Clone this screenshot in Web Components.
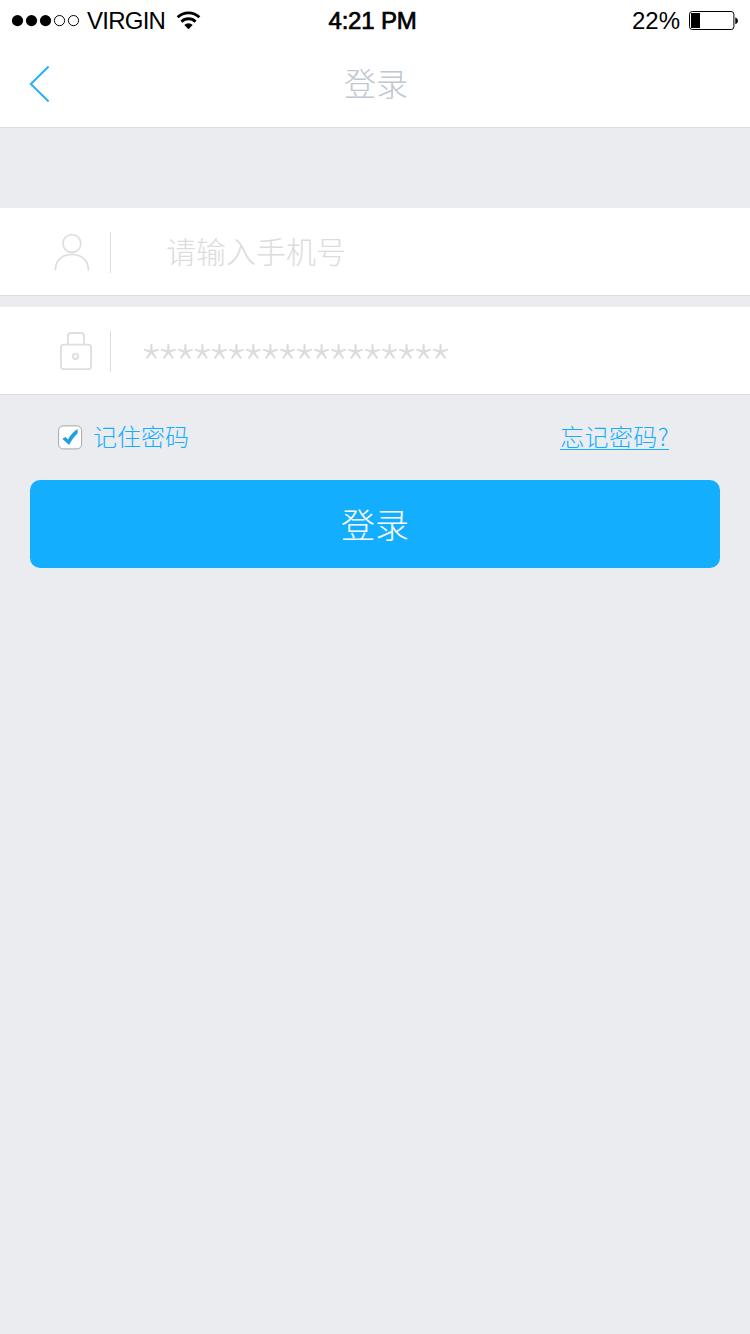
<!DOCTYPE html>
<html lang="zh-CN">
<head>
<meta charset="utf-8">
<title>登录</title>
<style>
  body {
    margin: 0;
    background: #ebecf0;
    font-family: "Liberation Sans", "Noto Sans CJK SC", sans-serif;
    --blue: #14aeff;
    --line: #dcdcde;
    --hint: #dcdcdc;
  }
</style>
</head>
<body>
<login-page></login-page>

<script>
// every component renders its markup once into an open shadow root
class BaseElement extends HTMLElement {
  constructor() {
    super();
    this.attachShadow({ mode: "open" });
    this.shadowRoot.innerHTML = this.render();
  }
}

class StatusBar extends BaseElement {
  render() {
    return `
      <style>
        :host {
          display: grid;
          grid-template-columns: 1fr auto 1fr;
          align-items: center;
          box-sizing: border-box;
          height: 40px;
          padding: 2px 12px 0;
          background: #fff;
          color: #000;
          font-size: 24px;
          line-height: 38px;
          white-space: nowrap;
        }
        svg { display: block; }
        div { display: flex; align-items: center; }
        .carrier { width: 79px; margin: 0 10px 0 7px; letter-spacing: -0.75px; }
        .time { -webkit-text-stroke: 0.7px #000; letter-spacing: -0.2px; margin-right: 5px; }
        .right { justify-content: flex-end; }
        .percent { margin-right: 1px; }
        .battery { margin: -1px 0 0 8px; }
        .dots, .wifi { margin-top: -1px; }
      </style>
      <div>
        <svg class="dots" width="68" height="12" viewBox="0 0 68 12">
          <circle cx="5.5" cy="5.6" r="5.6"/>
          <circle cx="19.5" cy="5.6" r="5.6"/>
          <circle cx="33.5" cy="5.6" r="5.6"/>
          <circle cx="47.5" cy="5.6" r="5.1" fill="none" stroke="#000"/>
          <circle cx="61.5" cy="5.6" r="5.1" fill="none" stroke="#000"/>
        </svg>
        <span class="carrier">VIRGIN</span>
        <svg class="wifi" width="25" height="19" viewBox="0 0 26 20">
          <g fill="none" stroke="#000" stroke-width="3">
            <path d="M1.6 6.6 A16.2 16.2 0 0 1 24.4 6.6"/>
            <path d="M5.6 11.2 A10.5 10.5 0 0 1 20.4 11.2"/>
          </g>
          <path d="M8.6 14.8 A5.9 5.9 0 0 1 17.4 14.8 L13 19.2 Z"/>
        </svg>
      </div>
      <span class="time">4:21 PM</span>
      <div class="right">
        <span class="percent">22%</span>
        <svg class="battery" width="49" height="20" viewBox="0 0 49 20">
          <rect x="0.5" y="0.5" width="44.4" height="18" rx="2.8" fill="none" stroke="#000"/>
          <rect x="2" y="2" width="9" height="15"/>
          <path d="M46.3 6.2 Q49 7.2 49 9.7 Q49 12.2 46.3 13.2 Z"/>
        </svg>
      </div>
    `;
  }
}

class NavBar extends BaseElement {
  render() {
    return `
      <style>
        :host {
          display: grid;
          grid-template-columns: 1fr auto 1fr;
          align-items: center;
          box-sizing: border-box;
          height: 88px;
          padding: 0 29px;
          background: #fff;
          border-bottom: 1px solid var(--line);
        }
        svg { display: block; }
        .title {
          color: #c0c7d0;
          font: 300 32px/40px "Noto Sans CJK SC", sans-serif;
          margin: 0 0 3px 2px;
        }
      </style>
      <svg width="22" height="38" viewBox="0 0 22 38">
        <path d="M19.6 1.5 L1.8 19 L19.6 36.5" fill="none" stroke="#28b0fa" stroke-width="2"/>
      </svg>
      <span class="title"><slot></slot></span>
    `;
  }
}

class InputRow extends BaseElement {
  render() {
    return `
      <style>
        :host {
          display: flex;
          align-items: center;
          box-sizing: border-box;
          height: 88px;
          background: #fff;
          border-bottom: 1px solid var(--line);
        }
        .icon { width: 110px; height: 41px; flex: none; border-right: 1px solid var(--line); margin-top: 2px; }
        .hint {
          color: var(--hint);
          font: 300 30px/40px "Noto Sans CJK SC", sans-serif;
          padding: 0 0 3px 55px;
          white-space: nowrap;
        }
        /* asterisks sit high in the line, so the masked text is bigger and pushed down */
        :host([masked]) .hint {
          font-size: 58px;
          font-weight: 100;
          letter-spacing: -7.75px;
          padding: 29px 0 0 28px;
        }
      </style>
      <div class="icon"><slot name="icon"></slot></div>
      <span class="hint"><slot></slot></span>
    `;
  }
}

class UserIcon extends BaseElement {
  render() {
    return `
      <style>
        :host { display: block; padding: 1px 0 0 53px; }
        svg { display: block; }
      </style>
      <svg width="38" height="40" viewBox="0 0 38 40" fill="none" stroke="#dedede" stroke-width="1.7">
        <circle cx="18.9" cy="10.5" r="8.9"/>
        <path d="M2.3 37.6 C2.3 27.5 9.3 21.3 18.8 21.3 C28.3 21.3 35.5 27.5 35.5 37.6"/>
      </svg>
    `;
  }
}

class LockIcon extends BaseElement {
  render() {
    return `
      <style>
        :host { display: block; padding: 0 0 0 59px; }
        svg { display: block; }
      </style>
      <svg width="34" height="40" viewBox="0 0 34 40" fill="none" stroke="#dedede" stroke-width="1.8">
        <rect x="1.9" y="13.7" width="30.2" height="24.5" rx="3"/>
        <path d="M8.9 13.5 V5 Q8.9 2 11.9 2 H22 Q25 2 25 5 V13.5"/>
        <circle cx="16.6" cy="25.3" r="2.7"/>
      </svg>
    `;
  }
}

class CheckBox extends BaseElement {
  render() {
    return `
      <style>
        :host { display: flex; align-items: center; gap: 10px; }
        svg { display: block; margin-top: 4px; }
      </style>
      <svg width="25" height="25" viewBox="0 0 25 25">
        <rect x="0.6" y="0.9" width="23" height="23" rx="4.5" fill="#fff" stroke="#a6a6a6"/>
        <path d="M4.3 13.8 L7.6 12 L10 14.6 C12.5 10 15.5 6.5 19.6 4 V8.6 C16 12 13.5 15.5 11 19.9 Z" fill="#259fe4"/>
      </svg>
      <slot></slot>
    `;
  }
}

class TextLink extends BaseElement {
  render() {
    return `
      <style>
        :host { display: block; }
        a {
          display: block;
          height: 26px;
          margin-top: 1px;
          line-height: 25px;
          letter-spacing: 0.4px;
          border-bottom: 1px solid var(--blue);
        }
      </style>
      <a><slot></slot></a>
    `;
  }
}

class MainButton extends BaseElement {
  render() {
    return `
      <style>
        :host { display: block; margin: 0 30px; }
        button {
          display: block;
          width: 100%;
          height: 88px;
          padding: 0;
          border: 0;
          border-radius: 10px;
          background: var(--blue);
          color: #fff;
          font: 300 34px/88px "Noto Sans CJK SC", sans-serif;
        }
      </style>
      <button><slot></slot></button>
    `;
  }
}

class LoginPage extends BaseElement {
  render() {
    return `
      <style>
        :host { display: block; min-height: 1334px; }
        .fields { display: flex; flex-direction: column; gap: 11px; padding-top: 80px; }
        .options {
          display: flex;
          justify-content: space-between;
          align-items: center;
          box-sizing: border-box;
          height: 85px;
          padding: 0 81px 4px 58px;
          color: var(--blue);
          font: 300 24px/36px "Noto Sans CJK SC", sans-serif;
        }
      </style>
      <status-bar></status-bar>
      <nav-bar>登录</nav-bar>
      <div class="fields">
        <input-row><user-icon slot="icon"></user-icon>请输入手机号</input-row>
        <input-row masked><lock-icon slot="icon"></lock-icon>******************</input-row>
      </div>
      <div class="options">
        <check-box>记住密码</check-box>
        <text-link>忘记密码?</text-link>
      </div>
      <main-button>登录</main-button>
    `;
  }
}

customElements.define("status-bar", StatusBar);
customElements.define("nav-bar", NavBar);
customElements.define("input-row", InputRow);
customElements.define("user-icon", UserIcon);
customElements.define("lock-icon", LockIcon);
customElements.define("check-box", CheckBox);
customElements.define("text-link", TextLink);
customElements.define("main-button", MainButton);
customElements.define("login-page", LoginPage);
</script>
</body>
</html>
